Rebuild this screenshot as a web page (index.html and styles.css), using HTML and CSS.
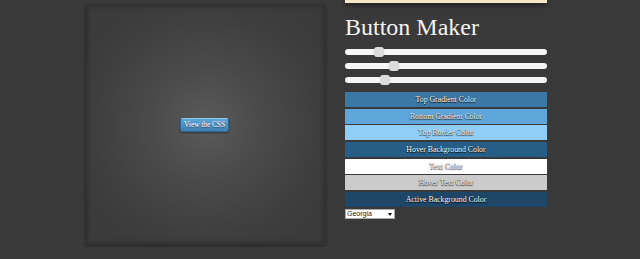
FILE: index.html
```html
<!DOCTYPE html>
<html>
<head>
<meta charset="utf-8">
<link rel="stylesheet" href="styles.css">
</head>
<body>
<div class="page">
  <div class="stage">
    <a class="demo-btn">View the CSS</a>
  </div>
  <div class="controls">
    <div class="notice"></div>
    <h1 class="title">Button Maker</h1>
    <div class="sliders">
      <input class="slider" type="range" min="0" max="100" value="15">
      <input class="slider" type="range" min="0" max="100" value="23">
      <input class="slider" type="range" min="0" max="100" value="18">
    </div>
    <div class="swatches">
      <div class="swatch sw-top">Top Gradient Color</div>
      <div class="swatch sw-bottom">Bottom Gradient Color</div>
      <div class="swatch sw-border">Top Border Color</div>
      <div class="swatch sw-hover">Hover Background Color</div>
      <div class="swatch sw-text">Text Color</div>
      <div class="swatch sw-hovertext">Hover Text Color</div>
      <div class="swatch sw-active">Active Background Color</div>
    </div>
    <div class="select-wrap">
      <select class="font-select">
        <option>Georgia</option>
        <option>Arial</option>
        <option>Verdana</option>
      </select>
    </div>
  </div>
</div>
</body>
</html>
```

FILE: styles.css
```css
html, body {
  margin: 0;
  padding: 0;
  background: #393939;
  height: 100%;
  overflow: hidden;
}

.page {
  display: flex;
  align-items: flex-start;
  padding-left: 85px;
  gap: 19px;
}

.stage {
  box-sizing: border-box;
  width: 241px;
  height: 241px;
  margin-top: 4px;
  border: 2px solid #323232;
  background: radial-gradient(ellipse 60% 60% at 50% 50%, #5a5a5a 0%, #4a4a4a 40%, #3e3e3e 80%, #3b3b3b 100%);
  box-shadow: inset 0 0 5px rgba(0, 0, 0, 0.3), 0 1px 2px rgba(0, 0, 0, 0.3);
  display: flex;
  align-items: center;
  justify-content: center;
}

.demo-btn {
  display: block;
  box-sizing: border-box;
  width: 49px;
  height: 14px;
  line-height: 12px;
  text-align: center;
  font-family: "Liberation Serif", serif;
  font-size: 7.3px;
  color: #ffffff;
  background: linear-gradient(#5fa6d8, #3d7fb0);
  border: 1px solid #2f6a96;
  border-top-color: #8cc8ef;
  border-radius: 3px;
  text-shadow: 0 1px 1px rgba(0, 0, 0, 0.5);
  box-shadow: 0 1px 2px rgba(0, 0, 0, 0.4);
  margin-left: -2px;
}

.controls {
  width: 202px;
  display: flex;
  flex-direction: column;
}

.notice {
  height: 3px;
  background: #f3e9c6;
  box-shadow: 0 2px 4px rgba(0, 0, 0, 0.6);
}

.title {
  margin: 10px 0 0 0;
  font-family: "Liberation Serif", serif;
  font-weight: normal;
  font-size: 24px;
  line-height: 28px;
  color: #f4f4f4;
}

.sliders {
  display: flex;
  flex-direction: column;
  gap: 8px;
  margin-top: 8px;
}

.slider {
  -webkit-appearance: none;
  appearance: none;
  display: block;
  margin: 0;
  width: 202px;
  height: 6px;
  border-radius: 3px;
  background: #f6f6f6;
  outline: none;
}

.slider::-webkit-slider-thumb {
  -webkit-appearance: none;
  appearance: none;
  width: 10px;
  height: 10px;
  border-radius: 3px;
  background: #dcdcdc;
  box-shadow: 0 0 1px rgba(0, 0, 0, 0.3);
}

.swatches {
  display: flex;
  flex-direction: column;
  gap: 1.7px;
  margin-top: 9px;
}

.swatch {
  height: 15px;
  line-height: 15px;
  text-align: center;
  font-family: "Liberation Serif", serif;
  font-size: 7.8px;
  color: #ffffff;
  text-shadow: 0 1px 1px rgba(0, 0, 0, 0.9), 0 0 1px rgba(0, 0, 0, 0.6);
}

.sw-top { background: #3b78a5; }
.sw-bottom { background: #5fa7da; }
.sw-border { background: #90cef7; }
.sw-hover { background: #275e87; }
.sw-text { background: #ffffff; }
.sw-hovertext { background: #cbcbcb; }
.sw-active { background: #1e4667; }

.select-wrap {
  position: relative;
  width: 50px;
  height: 10px;
  margin-top: 2px;
}

.select-wrap::after {
  content: "";
  position: absolute;
  right: 3px;
  top: 4px;
  border-left: 2px solid transparent;
  border-right: 2px solid transparent;
  border-top: 3px solid #111;
  pointer-events: none;
}

.font-select {
  -webkit-appearance: none;
  appearance: none;
  box-sizing: border-box;
  display: block;
  width: 50px;
  height: 10px;
  margin: 0;
  padding: 0 0 0 1px;
  font-family: "Liberation Sans", sans-serif;
  font-size: 7px;
  line-height: 8px;
  border: 1px solid #aaa;
  border-radius: 0;
  background: #ffffff;
  color: #222;
}
```
